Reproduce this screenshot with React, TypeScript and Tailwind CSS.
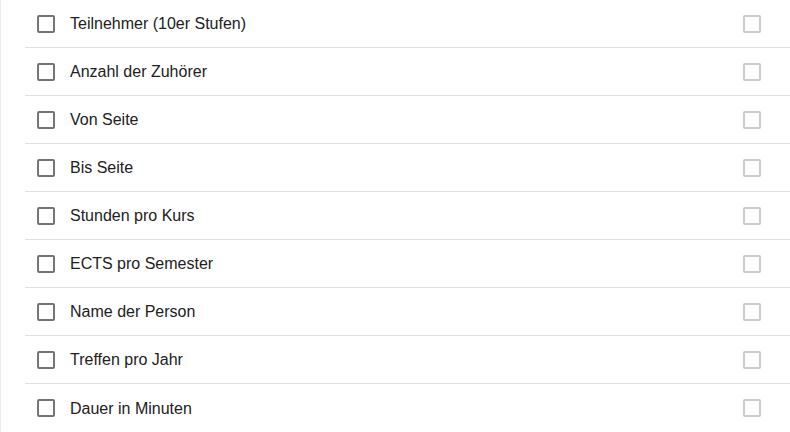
import React from "react";

const items = [
  "Teilnehmer (10er Stufen)",
  "Anzahl der Zuhörer",
  "Von Seite",
  "Bis Seite",
  "Stunden pro Kurs",
  "ECTS pro Semester",
  "Name der Person",
  "Treffen pro Jahr",
  "Dauer in Minuten",
];

export default function App() {
  return (
    <div
      className="w-[790px] h-[432px] overflow-hidden bg-white border-l border-[#ececec] flex"
      style={{ fontFamily: '"Liberation Sans", Arial, sans-serif' }}
    >
      <div className="flex-1 pl-[24px] flex flex-col">
        {items.map((label, i) => (
          <div
            key={label}
            className={`h-[48px] shrink-0 flex items-center ${
              i < items.length - 1 ? "border-b border-[#e0e0e0]" : ""
            }`}
          >
            <div className="ml-[12px] w-[18px] h-[18px] border-2 border-[#757575] rounded-[2px] shrink-0" />
            <span className="ml-[15px] text-[16px] leading-[20px] pt-[1px] text-[#212121] flex-1">{label}</span>
            <div className="mr-[29px] w-[18px] h-[18px] border-2 border-[#cccccc] rounded-[2px] shrink-0" />
          </div>
        ))}
      </div>
    </div>
  );
}
